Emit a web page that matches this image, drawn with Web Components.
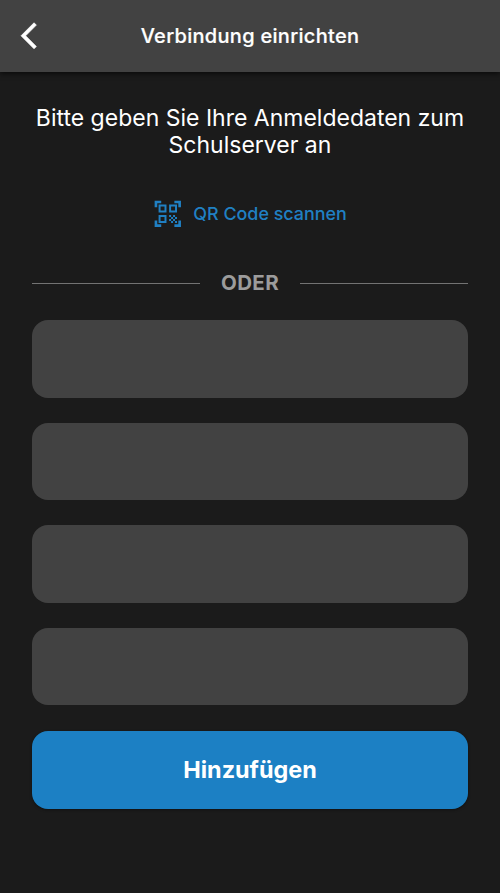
<!DOCTYPE html>
<html lang="de">
<head>
<meta charset="utf-8">
<title>Verbindung einrichten</title>
<style>
html,body{margin:0;height:100%;background:#1b1b1b}
body{font-family:Inter,"Liberation Sans",sans-serif;color:#fff;overflow:hidden}
</style>
</head>
<body>
<setup-page></setup-page>
<script>
function define(name, html){
  const template=document.createElement('template');
  template.innerHTML=html;
  customElements.define(name,class extends HTMLElement{
    constructor(){
      super();
      this.attachShadow({mode:'open'}).append(template.content.cloneNode(true));
    }
  });
}
define('app-bar',`<style>
:host{display:grid;grid-template-columns:64px 1fr 64px;align-items:center;flex:none;height:71.5px;background:#424242;box-shadow:0 2px 5px #0009}
svg{display:block;width:31.6px;height:31.6px;margin-left:20.6px;overflow:visible}
h1{margin:0;text-align:center;font-size:20px;font-weight:500;line-height:24px;letter-spacing:.3px;white-space:nowrap;-webkit-text-stroke:.2px #fff}
</style>
<svg viewBox="0 0 24 24" fill="#fff" stroke="#fff" stroke-width=".5"><path d="M11.67 3.87 9.9 2.1 0 12l9.9 9.9 1.77-1.77L3.54 12z"/></svg>
<h1><slot></slot></h1>`);
define('scan-link',`<style>
:host{display:flex;align-items:center;justify-content:center;gap:10px;color:#2080c3;font-size:17.9px;font-weight:500;line-height:32px}
svg{display:block;width:31.6px;height:31.6px}
</style>
<svg viewBox="0 0 24 24" fill="currentColor"><path d="M9.5 6.5v3h-3v-3h3M11 5H5v6h6V5zm-1.5 9.5v3h-3v-3h3M11 13H5v6h6v-6zm6.5-6.5v3h-3v-3h3M19 5h-6v6h6V5zm-6 8h1.5v1.5H13V13zm1.5 1.5H16V16h-1.5v-1.5zM16 13h1.5v1.5H16V13zm-3 3h1.5v1.5H13V16zm1.5 1.5H16V19h-1.5v-1.5zM16 16h1.5v1.5H16V16zm1.5-1.5H19V16h-1.5v-1.5zm0 3H19V19h-1.5v-1.5zM22 7h-2V4h-3V2h5v5zm0 15v-5h-2v3h-3v2h5zM2 22h5v-2H4v-3H2v5zM2 2v5h2V4h3V2H2z"/></svg>
<span><slot></slot></span>`);
define('or-divider',`<style>
:host{display:flex;align-items:center;color:#9c9c9c;font-size:20.5px;font-weight:700;line-height:24px;letter-spacing:.4px}
i{flex:1;height:1px;background:#737373}
span{width:100px;text-align:center}
</style><i></i><span><slot></slot></span><i></i>`);
define('text-field',`<style>
:host{display:block;height:77.3px;border-radius:16px;background:#424242}
</style>`);
define('primary-button',`<style>
:host{display:flex;align-items:center;justify-content:center;height:78.3px;border-radius:16px;background:#1c80c4;box-shadow:0 1px 3px #0006;font-size:23.4px;font-weight:700}
</style><span><slot></slot></span>`);
define('setup-page',`<style>
:host{display:flex;flex-direction:column;height:893px}
main{padding:33px 32px 0}
p{margin:0;text-align:center;font-size:23px;line-height:27px;white-space:nowrap}
scan-link{margin:39.5px 1.5px 0 0}
or-divider{margin-top:41px}
form{display:grid;gap:25.3px;margin-top:25.3px}
</style>
<app-bar>Verbindung einrichten</app-bar>
<main>
<p>Bitte geben Sie Ihre Anmeldedaten zum<br>Schulserver an</p>
<scan-link>QR Code scannen</scan-link>
<or-divider>ODER</or-divider>
<form><text-field></text-field><text-field></text-field><text-field></text-field><text-field></text-field><primary-button>Hinzufügen</primary-button></form>
</main>`);
</script>
</body>
</html>
